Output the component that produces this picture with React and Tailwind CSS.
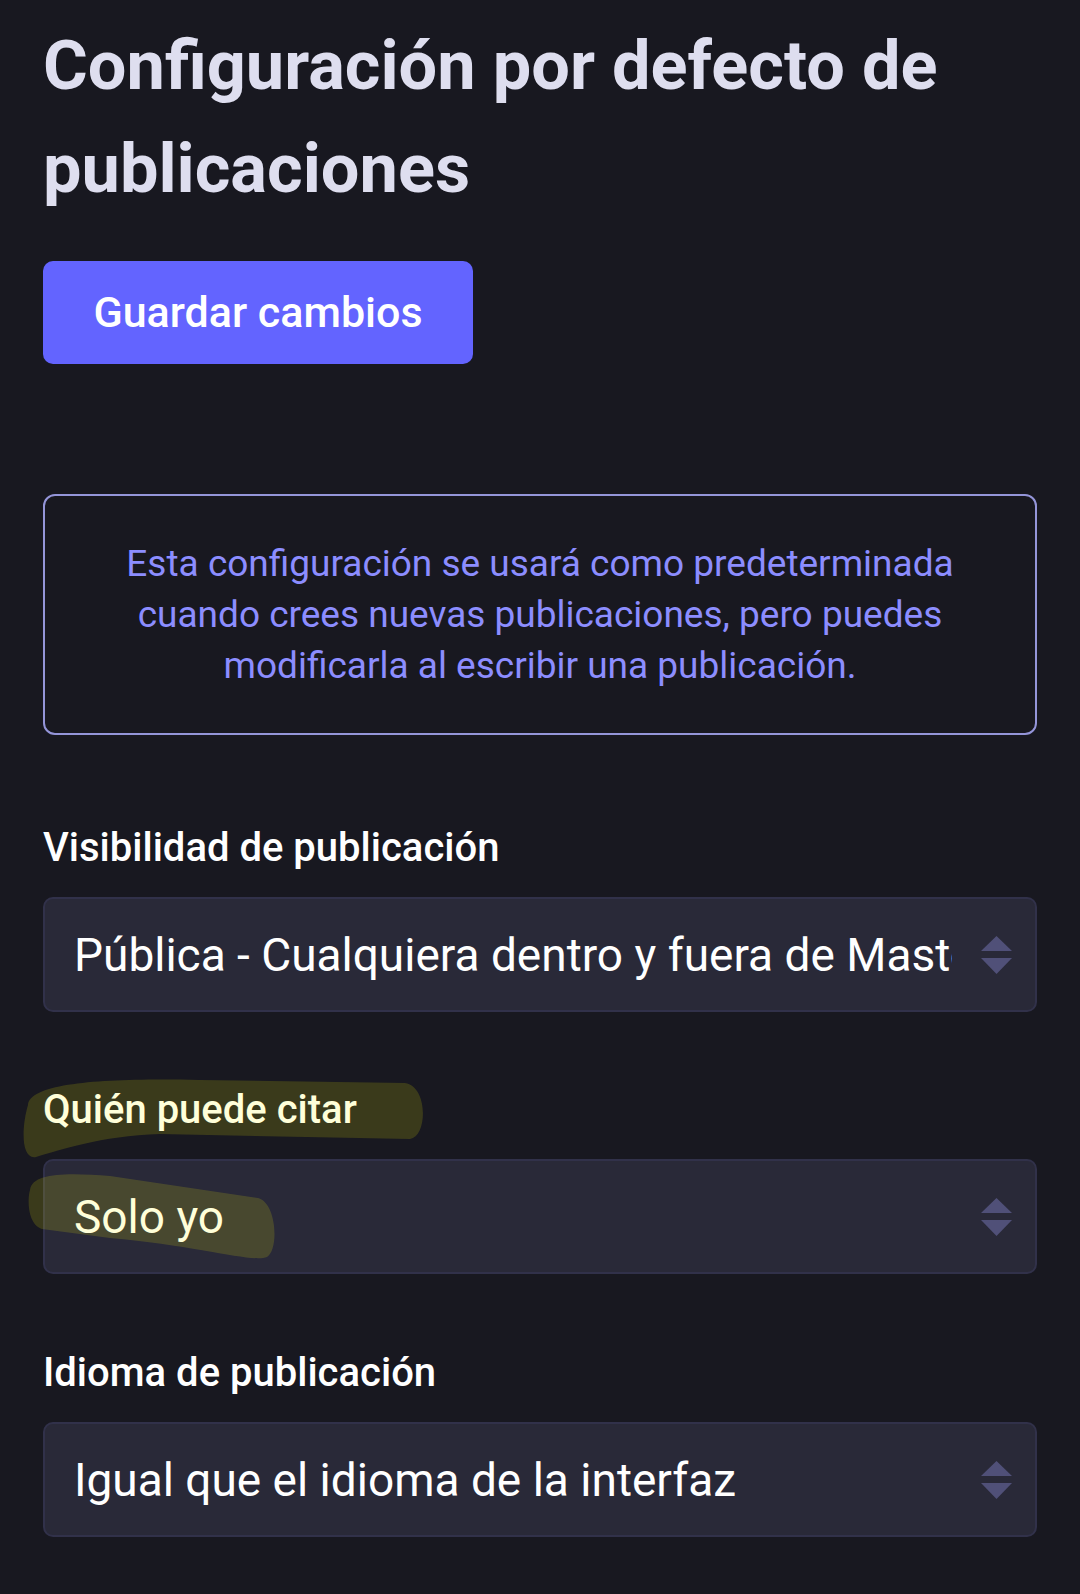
import React from "react";

function Arrows() {
  return (
    <svg width="31" height="38" viewBox="0 0 31 38" className="shrink-0">
      <polygon points="15.5,0 31,15 0,15" fill="#505078" />
      <polygon points="0,22 31,22 15.5,38" fill="#505078" />
    </svg>
  );
}

function Select({ value }) {
  return (
    <div className="mt-[26px] flex h-[115px] items-center rounded-[10px] border-2 border-[#31314a] bg-[#292938] pl-[29px] pr-[23px]">
      <div className="flex-1 overflow-hidden whitespace-nowrap text-[46px] leading-[54px] text-white">
        {value}
      </div>
      <div className="ml-[29px]">
        <Arrows />
      </div>
    </div>
  );
}

export default function App() {
  return (
    <div
      className="relative min-h-[1594px] w-full overflow-hidden bg-[#181820]"
      style={{ fontFamily: "Roboto, 'Noto Sans', sans-serif" }}
    >
      <div className="px-[43px] pt-[14px]">
        <h1 className="text-[68.5px] font-bold leading-[103px] text-[#dedeef]">
          Configuración por defecto de publicaciones
        </h1>

        <button className="mt-[41px] flex h-[103px] w-[430px] items-center justify-center rounded-[10px] bg-[#6364ff] text-[43px] font-medium text-white">
          Guardar cambios
        </button>

        <div className="mt-[130px] rounded-[12px] border-2 border-[#9495d9] px-[30px] py-[42px] text-center text-[37px] leading-[51px] text-[#8c8dff]">
          Esta configuración se usará como predeterminada
          <br />
          cuando crees nuevas publicaciones, pero puedes
          <br />
          modificarla al escribir una publicación.
        </div>

        <div className="mt-[90px] text-[40px] font-medium leading-[46px] text-white">
          Visibilidad de publicación
        </div>
        <Select value="Pública - Cualquiera dentro y fuera de Mastodon" />

        <div className="mt-[75px] text-[40px] font-medium leading-[46px] text-white">
          Quién puede citar
        </div>
        <Select value="Solo yo" />

        <div className="mt-[76px] text-[40px] font-medium leading-[46px] text-white">
          Idioma de publicación
        </div>
        <Select value="Igual que el idioma de la interfaz" />
      </div>

      <svg
        className="pointer-events-none absolute left-0 top-0"
        width="1080"
        height="1594"
        viewBox="0 0 1080 1594"
      >
        <path
          d="M28,1105 C30,1082 110,1078 200,1080 L405,1083 C428,1086 428,1136 410,1139 L160,1134 C100,1136 60,1150 36,1157 C20,1160 22,1125 28,1105 Z"
          fill="rgba(255,255,0,0.15)"
        />
        <path
          d="M30,1190 C32,1172 70,1173 110,1176 L258,1198 C277,1203 279,1250 267,1257 C252,1263 200,1246 110,1238 L42,1229 C28,1225 27,1200 30,1190 Z"
          fill="rgba(255,255,0,0.15)"
        />
      </svg>
    </div>
  );
}
